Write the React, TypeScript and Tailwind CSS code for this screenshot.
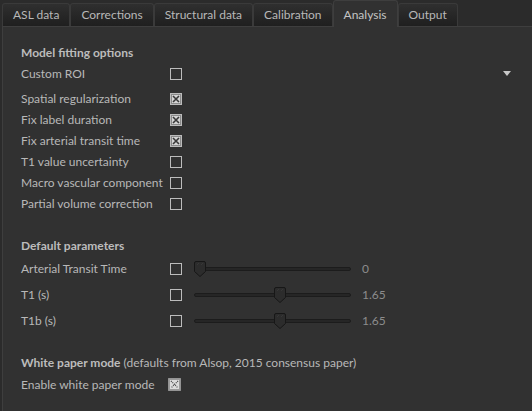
import React from "react";

const font = { fontFamily: "Lato, 'Open Sans', sans-serif" };

function Box({ checked, dotted }: { checked?: boolean; dotted?: boolean }) {
  if (dotted) {
    return (
      <svg width="13" height="13" viewBox="0 0 13 13" className="block">
        <rect x="0.5" y="0.5" width="12" height="12" fill="#9a9a9a" stroke="#c4c4c4" strokeDasharray="1 1" />
        <rect x="2" y="2" width="9" height="9" fill="#dcdcdc" />
        <path d="M3 3L10 10M10 3L3 10" stroke="#444" strokeWidth="1.2" strokeDasharray="1 1" />
      </svg>
    );
  }
  return (
    <svg width="12" height="12" viewBox="0 0 12 12" className="block">
      <rect x="0.5" y="0.5" width="11" height="11" fill={checked ? "#8a8a8a" : "none"} stroke="#bcbcbc" />
      {checked && (
        <>
          <rect x="2" y="2" width="8" height="8" fill="#d4d4d4" />
          <path d="M3 3L9 9M9 3L3 9" stroke="#3a3a3a" strokeWidth="1.6" />
        </>
      )}
    </svg>
  );
}

function Row({ label, checked, extra }: { label: string; checked?: boolean; extra?: React.ReactNode }) {
  return (
    <div className="flex h-[21px] items-center">
      <div className="w-[149px] shrink-0">{label}</div>
      <Box checked={checked} />
      {extra}
    </div>
  );
}

function Slider({ pos, value }: { pos: number; value: string }) {
  return (
    <div className="flex items-center">
      <div className="relative ml-[12px] h-[16px] w-[157px]">
        <div className="absolute left-0 right-0 top-[6px] h-[4px] rounded-full border border-[#1c1c1c] bg-[#262626]" />
        <svg
          width="12"
          height="16"
          viewBox="0 0 12 16"
          className="absolute top-[0px]"
          style={{ left: pos }}
        >
          <path d="M2 0.5H10Q11.5 0.5 11.5 2V10.5L6 15.5L0.5 10.5V2Q0.5 0.5 2 0.5Z" fill="#2c2c2c" stroke="#171717" />
          <path d="M3.5 3.5L4.5 2.5M7.5 3.5L8.5 2.5" stroke="#444" strokeWidth="1" />
        </svg>
      </div>
      <div className="ml-[11px] text-[#8c8c8c]">{value}</div>
    </div>
  );
}

const tabs = ["ASL data", "Corrections", "Structural data", "Calibration", "Analysis", "Output"];

export default function App() {
  return (
    <div className="h-[411px] w-[532px] overflow-hidden bg-[#2b2b2b] text-[12px] text-[#b8b8b8]" style={font}>
      <div className="flex h-[26px] items-end pl-[2px]">
        {tabs.map((t) => {
          const active = t === "Analysis";
          return (
            <div
              key={t}
              className={
                active
                  ? "relative z-10 -mb-px flex h-[27px] items-start rounded-t-[3px] border border-b-0 border-[#3e3e3e] bg-[#313131] px-[10px] pt-[5px] text-[#c4c4c4]"
                  : "flex h-[23px] items-center rounded-t-[3px] border border-b-0 border-[#3a3a3a] bg-gradient-to-b from-[#2f2f2f] to-[#1f1f1f] px-[10px] text-[#b8b8b8]"
              }
            >
              {t}
            </div>
          );
        })}
      </div>
      <div className="ml-[2px] h-[385px] border-l border-t border-[#3e3e3e] bg-[#313131] pl-[18px] pt-[17px]">
        <div className="h-[18px] font-bold leading-[18px] text-[#bcbcbc]">Model fitting options</div>
        <div className="mt-[1px]">
          <Row
            label="Custom ROI"
            extra={
              <div className="ml-auto mr-[21px]">
                <svg width="8" height="5" viewBox="0 0 8 5" className="block">
                  <path d="M0 0H8L4 5Z" fill="#c8c8c8" />
                </svg>
              </div>
            }
          />
          <div className="h-[4px]" />
          <Row label="Spatial regularization" checked />
          <Row label="Fix label duration" checked />
          <Row label="Fix arterial transit time" checked />
          <Row label="T1 value uncertainty" />
          <Row label="Macro vascular component" />
          <Row label="Partial volume correction" />
        </div>
        <div className="mt-[23px] h-[18px] font-bold leading-[18px] text-[#bcbcbc]">Default parameters</div>
        <div className="mt-[3px] flex flex-col gap-[5px]">
          <Row label="Arterial Transit Time" extra={<Slider pos={0} value="0" />} />
          <Row label="T1 (s)" extra={<Slider pos={80} value="1.65" />} />
          <Row label="T1b (s)" extra={<Slider pos={80} value="1.65" />} />
        </div>
        <div className="mt-[23px] h-[18px] leading-[18px]">
          <span className="font-bold text-[#bcbcbc]">White paper mode</span>{" "}
          <span>(defaults from Alsop, 2015 consensus paper)</span>
        </div>
        <div className="mt-[2px] flex h-[21px] items-center">
          <div className="w-[147px] shrink-0">Enable white paper mode</div>
          <Box dotted />
        </div>
      </div>
    </div>
  );
}
